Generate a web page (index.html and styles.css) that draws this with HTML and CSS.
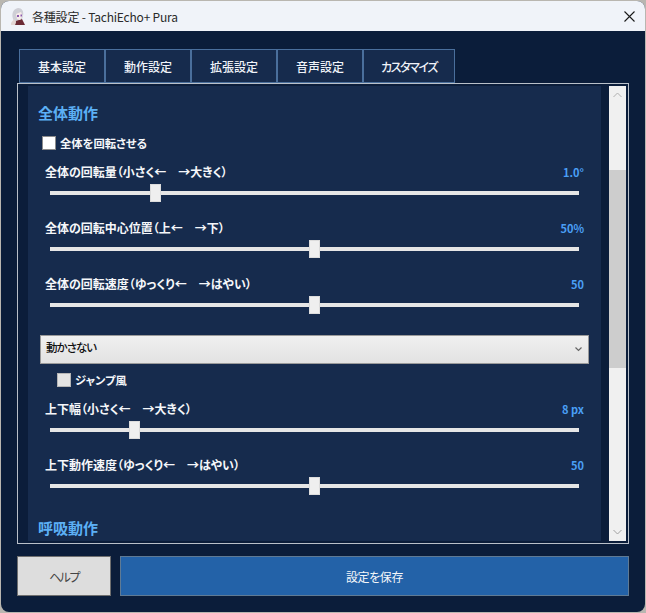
FILE: index.html
```html
<!DOCTYPE html>
<html lang="ja">
<head>
    <meta charset="UTF-8">
    <meta name="viewport" content="width=device-width, initial-scale=1.0">
    <title>各種設定 - TachiEcho+ Pura</title>
    <link rel="stylesheet" href="styles.css">
</head>
<body>
    <div class="window">
        <!-- タイトルバー -->
        <div class="titlebar">
            <svg class="app-icon" width="16" height="17" viewBox="0 0 16 17">
                <path d="M5 17 L6 12 L12 11 L15 17 Z" fill="#6b2a35"/>
                <path d="M4 13 C1 8 2 1 8 0 C12 0 14 3 13 8 L12 11 L6 13 Z" fill="#cfcfd6"/>
                <path d="M6 6 L11 4 L12.500 8 L10 12 L7 11 Z" fill="#f8ecea"/>
                <rect x="7" y="7" width="2" height="2" fill="#8a5ab0"/>
                <rect x="10.500" y="6.500" width="1.500" height="2" fill="#8a5ab0"/>
                <path d="M1 15 L4 11 L6 14 L5 17 L1 17 Z" fill="#e3d6d4"/>
            </svg>
            <span class="title-text">各種設定 - TachiEcho+ Pura</span>
            <svg class="close-icon" width="11" height="11" viewBox="0 0 11 11">
                <path d="M0.500 0.500 L10.500 10.500 M10.500 0.500 L0.500 10.500" stroke="#1a1a1a" stroke-width="1.100" fill="none"/>
            </svg>
        </div>

        <div class="client">
            <div class="tabs">
                <div class="tab">基本設定</div>
                <div class="tab">動作設定</div>
                <div class="tab">拡張設定</div>
                <div class="tab">音声設定</div>
                <div class="tab tab-wide">カスタマイズ</div>
            </div>

            <div class="panel">
                <div class="content">
                    <h2 class="section-title">全体動作</h2>

                    <label class="check">
                        <span class="box"></span>全体を回転させる
                    </label>

                    <div class="setting setting-first">
                        <div class="setting-head"><span>全体の回転量（小さく←　→大きく）</span><span class="value">1.0°</span></div>
                        <input type="range" min="0" max="100" step="0.1" value="19.4">
                    </div>
                    <div class="setting">
                        <div class="setting-head"><span>全体の回転中心位置（上←　→下）</span><span class="value">50%</span></div>
                        <input type="range" min="0" max="100" step="0.1" value="50">
                    </div>
                    <div class="setting">
                        <div class="setting-head"><span>全体の回転速度（ゆっくり←　→はやい）</span><span class="value">50</span></div>
                        <input type="range" min="0" max="100" step="0.1" value="50">
                    </div>

                    <div class="select">
                        <span>動かさない</span>
                        <svg width="7" height="5" viewBox="0 0 7 5">
                            <path d="M0.500 0.500 L3.500 3.500 L6.500 0.500" stroke="#666" stroke-width="1.200" fill="none"/>
                        </svg>
                    </div>

                    <label class="check check-sub">
                        <span class="box box-off"></span>ジャンプ風
                    </label>

                    <div class="setting setting-first">
                        <div class="setting-head"><span>上下幅（小さく←　→大きく）</span><span class="value">8 px</span></div>
                        <input type="range" min="0" max="100" step="0.1" value="15.3">
                    </div>
                    <div class="setting">
                        <div class="setting-head"><span>上下動作速度（ゆっくり←　→はやい）</span><span class="value">50</span></div>
                        <input type="range" min="0" max="100" step="0.1" value="50">
                    </div>

                    <h2 class="section-title section-next">呼吸動作</h2>
                </div>

                <div class="scrollbar">
                    <svg class="arrow" width="9" height="6" viewBox="0 0 9 6">
                        <path d="M0.500 5 L4.500 1 L8.500 5" stroke="#b0b0b0" stroke-width="1" fill="none"/>
                    </svg>
                    <div class="scroll-thumb"></div>
                    <svg class="arrow" width="9" height="6" viewBox="0 0 9 6">
                        <path d="M0.500 1 L4.500 5 L8.500 1" stroke="#a0a0a0" stroke-width="1" fill="none"/>
                    </svg>
                </div>
            </div>

            <div class="buttons">
                <button class="btn btn-help">ヘルプ</button>
                <button class="btn btn-save">設定を保存</button>
            </div>
        </div>
    </div>
</body>
</html>
```

FILE: styles.css
```css
* {
    margin: 0;
    padding: 0;
    box-sizing: border-box;
}

html, body {
    width: 646px;
    height: 613px;
    overflow: hidden;
}

body {
    font-family: "Noto Sans CJK JP", "Noto Sans", sans-serif;
    font-feature-settings: "palt";
    background: #b9b6b0;
    padding: 1px;
}

.window {
    width: 644px;
    height: 611px;
    display: flex;
    flex-direction: column;
    border-radius: 8px;
    overflow: hidden;
    background: #0b1d3a;
}

/* タイトルバー */
.titlebar {
    height: 30px;
    flex: none;
    display: flex;
    align-items: center;
    padding: 0 10px 0 9px;
    background: #f0f3f9;
    color: #1a1a1a;
}

.app-icon {
    flex: none;
}

.title-text {
    margin-left: 6px;
    font-size: 12px;
    letter-spacing: -0.2px;
    color: #2a2a2a;
}

.close-icon {
    margin-left: auto;
}

.client {
    flex: 1;
    display: flex;
    flex-direction: column;
    padding: 18px 16px 0 16px;
}

/* タブ */
.tabs {
    display: flex;
    height: 34px;
    padding-left: 2px;
}

.tab {
    width: 86px;
    display: flex;
    align-items: center;
    justify-content: center;
    background: #162b4d;
    border: 1px solid #4a6f9c;
    color: #f0f3f9;
    font-size: 12px;
    font-weight: 500;
}

.tab-wide {
    width: 92px;
    letter-spacing: -1.4px;
}

/* パネル */
.panel {
    height: 461px;
    display: flex;
    align-items: stretch;
    padding: 2px 2px 2px 10px;
    border: 1px solid #b9c0c9;
    background: #0b1d3a;
}

.content {
    width: 573px;
    flex: none;
    overflow: hidden;
    background: #162b4d;
    padding: 17px 12px 0 12px;
    color: #f5f7fa;
}

.section-title {
    font-size: 15px;
    font-weight: 700;
    line-height: 20px;
    color: #5cb0f5;
    margin-left: -2px;
}

.section-next {
    margin-top: 23px;
}

.check {
    display: flex;
    align-items: center;
    height: 18px;
    margin-top: 11px;
    margin-left: 2px;
    font-size: 11.3px;
    font-weight: 700;
}

.check-sub {
    margin-top: 7px;
    margin-left: 17px;
}

.box {
    width: 14px;
    height: 14px;
    margin-right: 4px;
    background: #fff;
    border: 1px solid #8c8c8c;
}

.box-off {
    background: #e3e3e3;
    border-color: #b5b5b5;
}

.setting {
    margin-top: 17px;
    padding-left: 5px;
}

.setting-first {
    margin-top: 11px;
}

.setting-head {
    display: flex;
    justify-content: space-between;
    height: 18px;
    line-height: 18px;
    font-size: 12px;
    font-weight: 700;
    padding-right: 5px;
}

.value {
    font-size: 11px;
    color: #4a9ff5;
}

input[type="range"] {
    display: block;
    -webkit-appearance: none;
    appearance: none;
    width: 529px;
    height: 18px;
    margin: 3px 0 0 5px;
    background: transparent;
}

input[type="range"]::-webkit-slider-runnable-track {
    height: 4px;
    background: #e6e6e6;
}

input[type="range"]::-webkit-slider-thumb {
    -webkit-appearance: none;
    width: 11px;
    height: 18px;
    margin-top: -7px;
    background: #efefef;
    border: 1px solid #dcdcdc;
}

/* セレクト */
.select {
    height: 29px;
    margin-top: 21px;
    display: flex;
    justify-content: space-between;
    align-items: center;
    padding: 0 6px 0 5px;
    border: 1px solid #9a9a9a;
    background: linear-gradient(#f0f0f0, #e2e2e2);
    color: #111;
    font-size: 11.5px;
    letter-spacing: -1px;
    font-weight: 500;
}

.select span {
    margin-top: -6px;
}

/* スクロールバー */
.scrollbar {
    width: 17px;
    flex: none;
    margin-left: 8px;
    display: flex;
    flex-direction: column;
    align-items: center;
    justify-content: space-between;
    padding: 6px 0;
    background: #f0f0f0;
    position: relative;
}

.scroll-thumb {
    position: absolute;
    top: 84px;
    left: 0;
    width: 17px;
    height: 198px;
    background: #cdcdcd;
}

/* ボタン */
.buttons {
    display: flex;
    gap: 9px;
    margin-top: 12px;
    height: 40px;
}

.btn {
    font-family: inherit;
    font-feature-settings: inherit;
    font-size: 12px;
    border: 1px solid #6f6f6f;
}

.btn-help {
    width: 94px;
    background: #dddddd;
    color: #444;
    letter-spacing: -1.5px;
}

.btn-save {
    flex: 1;
    background: #2362a8;
    border-color: #5f7a94;
    color: #f5f7fa;
    letter-spacing: -0.4px;
}
```
